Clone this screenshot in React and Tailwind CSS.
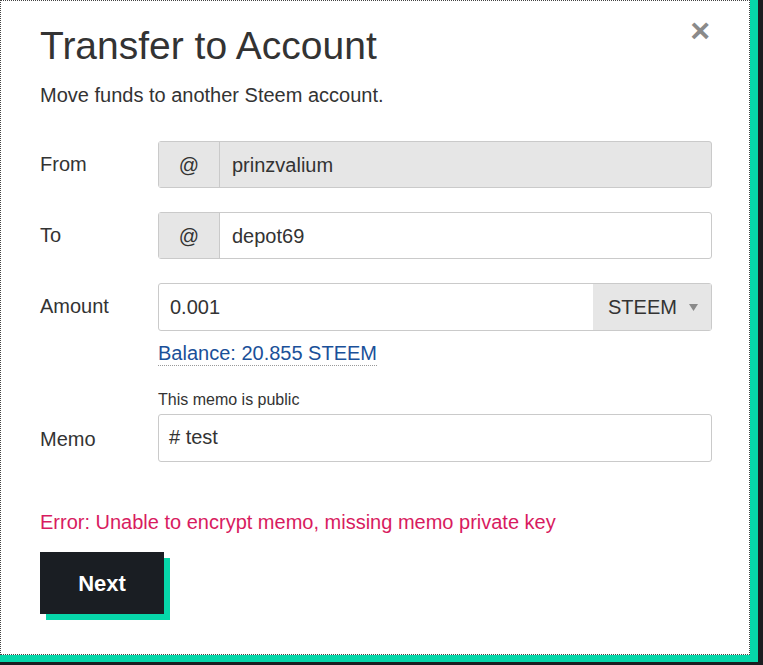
import React from "react";

export default function App() {
  return (
    <div className="w-[763px] h-[665px] bg-[#1b1d20] overflow-hidden" style={{ fontFamily: '"Liberation Sans", Arial, sans-serif' }}>
      <div className="w-[758px] h-[662px] bg-[#06d6a9] pt-[10px] pl-[7px]">
        <div className="-mt-[10px] -ml-[7px] w-[750px] h-[655px] bg-white border border-dotted border-[#444] relative">
          <button className="absolute right-[39px] top-[12px] text-[#8a8a8a] text-[34px] leading-none font-bold">×</button>
          <div className="pl-[39px] pr-[37px] pt-[22px]">
            <h1 className="text-[39px] leading-[46px] text-[#333]">Transfer to Account</h1>
            <p className="mt-[14px] text-[20px] leading-[24px] text-[#333]">Move funds to another Steem account.</p>

            <div className="mt-[34px] flex items-center">
              <div className="w-[118px] text-[20px] text-[#333] -mt-[2px]">From</div>
              <div className="flex-1 h-[47px] flex border border-[#cacaca] rounded-[3px] bg-[#e6e6e6] text-[20px] text-[#333]">
                <div className="w-[61px] flex items-center justify-center border-r border-[#cacaca] bg-[#e6e6e6]">@</div>
                <div className="flex items-center pl-[12px]">prinzvalium</div>
              </div>
            </div>

            <div className="mt-[24px] flex items-center">
              <div className="w-[118px] text-[20px] text-[#333] -mt-[2px]">To</div>
              <div className="flex-1 h-[47px] flex border border-[#cacaca] rounded-[3px] bg-white text-[20px] text-[#333]">
                <div className="w-[61px] flex items-center justify-center border-r border-[#cacaca] bg-[#e6e6e6]">@</div>
                <div className="flex items-center pl-[12px]">depot69</div>
              </div>
            </div>

            <div className="mt-[24px] flex items-start">
              <div className="w-[118px] text-[20px] text-[#333] pt-[8px]">Amount</div>
              <div className="flex-1">
                <div className="h-[48px] flex border border-[#cacaca] rounded-[3px] bg-white text-[20px] text-[#333]">
                  <div className="flex-1 flex items-center pl-[11px]">0.001</div>
                  <div className="w-[118px] flex items-center pl-[14px] bg-[#e6e6e6] border-l border-[#e6e6e6]">
                    <span>STEEM</span>
                    <svg className="ml-[12px]" width="9" height="7" viewBox="0 0 9 7"><path d="M0 0H9L4.5 7Z" fill="#8a8a8a" /></svg>
                  </div>
                </div>
                <div className="mt-[10px] inline-block text-[20px] leading-[24px] text-[#1a5099] border-b border-dotted border-[#999]">Balance: 20.855 STEEM</div>
              </div>
            </div>

            <div className="mt-[24px] pl-[118px] text-[16px] text-[#333] leading-[18px]">This memo is public</div>
            <div className="mt-[5px] flex items-center">
              <div className="w-[118px] text-[20px] text-[#333] pt-[2px]">Memo</div>
              <div className="flex-1 h-[48px] flex items-center pl-[10px] border border-[#cacaca] rounded-[3px] bg-white text-[20px] text-[#333] pb-[2px]">
                # test
              </div>
            </div>

            <div className="mt-[48px] text-[20px] leading-[24px] text-[#d81b60]">Error: Unable to encrypt memo, missing memo private key</div>

            <div className="mt-[18px] relative w-[130px] h-[68px]">
              <div className="absolute left-[6px] top-[6px] w-[124px] h-[62px] bg-[#06d6a9]" />
              <button className="absolute left-0 top-0 w-[124px] h-[62px] bg-[#1a1e23] text-white text-[22px] font-bold">Next</button>
            </div>
          </div>
        </div>
      </div>
    </div>
  );
}
